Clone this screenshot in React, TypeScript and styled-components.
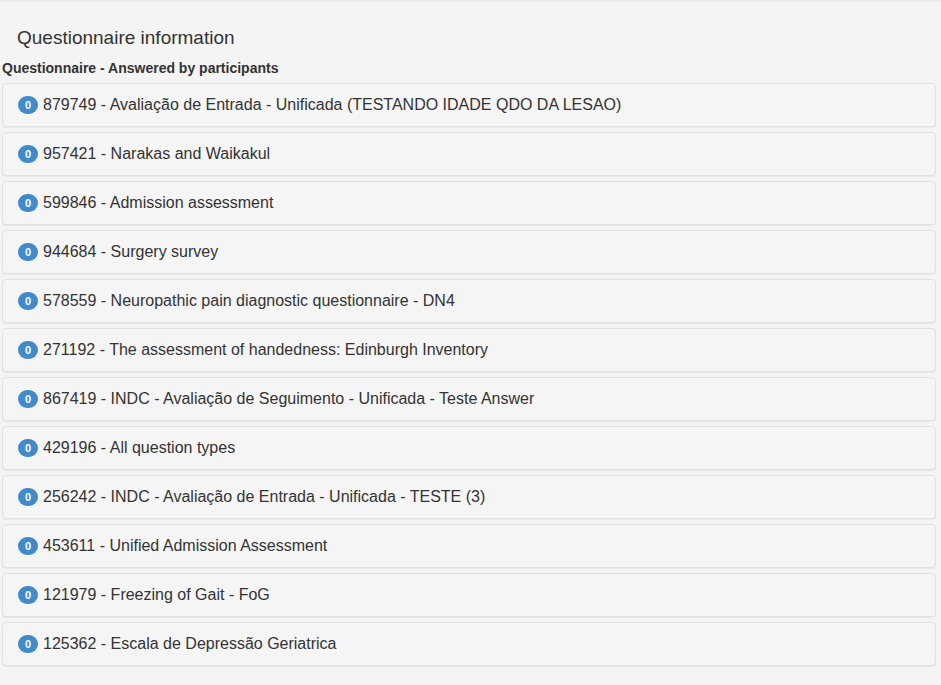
import { FunctionComponent } from 'react'
import styled, { createGlobalStyle } from 'styled-components'

const GlobalStyle = createGlobalStyle`
  html, body {
    margin: 0;
    padding: 0;
    background: #f4f4f4;
    font-family: 'Liberation Sans', Arial, sans-serif;
    color: #333;
  }
`

const Page = styled.div`
  min-height: 685px;
  border-top: 2px solid #ececec;
  box-sizing: border-box;
  padding: 0 5px 0 2px;
`

const Title = styled.h3`
  margin: 0;
  padding: 25px 0 0 15px;
  font-size: 19px;
  font-weight: 500;
  line-height: 22px;
  color: #333;
`

const Subtitle = styled.h5`
  margin: 0;
  padding-top: 11px;
  font-size: 14px;
  font-weight: bold;
  line-height: 16px;
  color: #333;
`

const List = styled.div`
  display: flex;
  flex-direction: column;
  gap: 5px;
  margin-top: 7px;
`

const Item = styled.div`
  display: flex;
  align-items: center;
  height: 44px;
  box-sizing: border-box;
  padding: 0 15px;
  background: #f5f5f5;
  border: 1px solid #e1e1e1;
  border-radius: 4px;
  box-shadow: 0 1px 1px rgba(0, 0, 0, 0.05);
  font-size: 16px;
`

const Badge = styled.span`
  display: inline-flex;
  align-items: center;
  justify-content: center;
  min-width: 20px;
  height: 18px;
  margin-right: 5px;
  border-radius: 9px;
  background: #428bca;
  color: #fff;
  font-size: 11px;
  font-weight: bold;
`

const questionnaires = [
  '879749 - Avaliação de Entrada - Unificada (TESTANDO IDADE QDO DA LESAO)',
  '957421 - Narakas and Waikakul',
  '599846 - Admission assessment',
  '944684 - Surgery survey',
  '578559 - Neuropathic pain diagnostic questionnaire - DN4',
  '271192 - The assessment of handedness: Edinburgh Inventory',
  '867419 - INDC - Avaliação de Seguimento - Unificada - Teste Answer',
  '429196 - All question types',
  '256242 - INDC - Avaliação de Entrada - Unificada - TESTE (3)',
  '453611 - Unified Admission Assessment',
  '121979 - Freezing of Gait - FoG',
  '125362 - Escala de Depressão Geriatrica',
]

const App: FunctionComponent = () => (
  <>
    <GlobalStyle />
    <Page>
      <Title>Questionnaire information</Title>
      <Subtitle>Questionnaire - Answered by participants</Subtitle>
      <List>
        {questionnaires.map((q) => (
          <Item key={q}>
            <Badge>0</Badge>
            {q}
          </Item>
        ))}
      </List>
    </Page>
  </>
)

export default App
